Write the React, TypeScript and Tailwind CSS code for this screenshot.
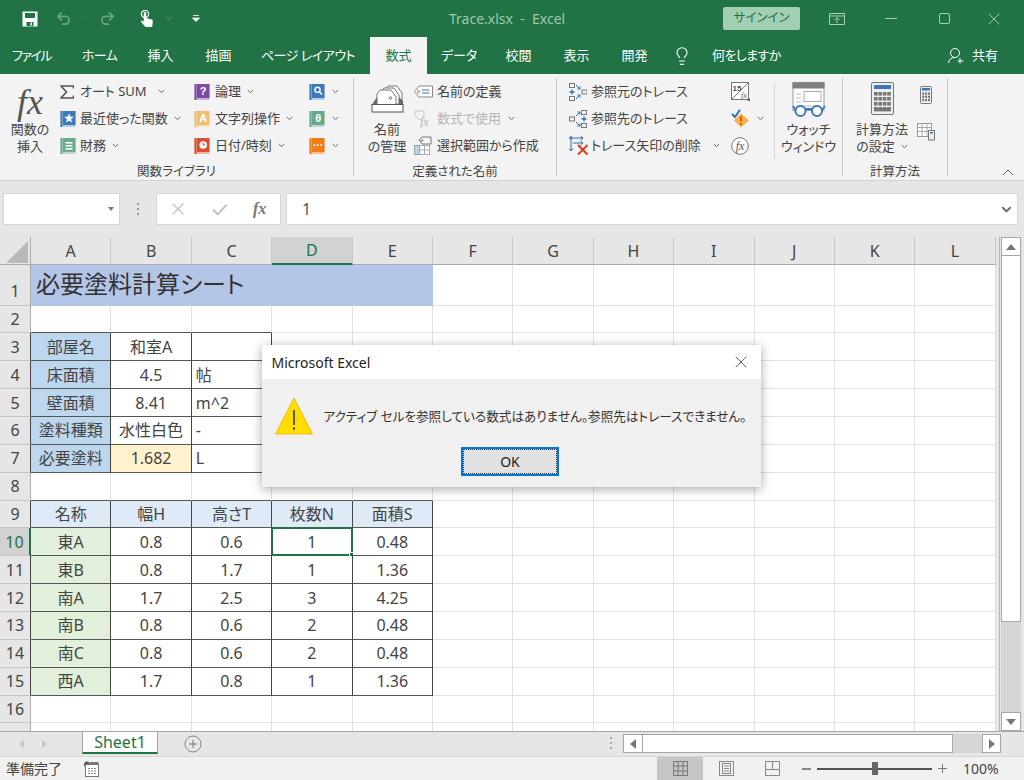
import { ChevronDown, Lightbulb, Redo2, Undo2, X } from "lucide-react";
import type { ReactNode } from "react";

const tabs = [
  { label: "ファイル", w: "w-[63px] tracking-[-1.5px]" },
  { label: "ホーム", w: "w-[73px] tracking-[-0.5px]" },
  { label: "挿入", w: "w-[49px]" },
  { label: "描画", w: "w-[67px]" },
  { label: "ページ レイアウト", w: "w-[112px] tracking-[-0.5px]" },
  { label: "数式", w: "w-[57px]", active: true },
  { label: "データ", w: "w-[64px]" },
  { label: "校閲", w: "w-[55px]" },
  { label: "表示", w: "w-[61px]" },
  { label: "開発", w: "w-[55px]" },
];

const columns = ["A", "B", "C", "D", "E", "F", "G", "H", "I", "J", "K", "L"];

const cells: Record<number, string[]> = {
  3: ["部屋名", "和室A", ""],
  4: ["床面積", "4.5", "帖"],
  5: ["壁面積", "8.41", "m^2"],
  6: ["塗料種類", "水性白色", "-"],
  7: ["必要塗料", "1.682", "L"],
  9: ["名称", "幅H", "高さT", "枚数N", "面積S"],
  10: ["東A", "0.8", "0.6", "1", "0.48"],
  11: ["東B", "0.8", "1.7", "1", "1.36"],
  12: ["南A", "1.7", "2.5", "3", "4.25"],
  13: ["南B", "0.8", "0.6", "2", "0.48"],
  14: ["南C", "0.8", "0.6", "2", "0.48"],
  15: ["西A", "1.7", "0.8", "1", "1.36"],
};

function isDark(col: number, row: number) {
  return (row >= 3 && row <= 7 && col >= 0 && col <= 2) || (row >= 9 && row <= 15 && col >= 0 && col <= 4);
}

function cellFill(col: number, row: number) {
  if (row >= 3 && row <= 7 && col === 0) return "bg-[#bdd7ee]";
  if (row === 7 && col === 1) return "bg-[#fff2cc]";
  if (row === 9 && col <= 4) return "bg-[#deeaf6]";
  if (row >= 10 && row <= 15 && col === 0) return "bg-[#e2efda]";
  return "bg-white";
}

function Chevron({ className = "" }: { className?: string }) {
  return (
    <svg width="7" height="5" viewBox="0 0 7 5" className={className}>
      <path d="M0.8 1 L3.5 3.6 L6.2 1" fill="none" stroke="#666" strokeWidth="1" />
    </svg>
  );
}

function Book({ color, light, children }: { color: string; light: string; children: ReactNode }) {
  return (
    <svg width="16" height="18" viewBox="0 0 16 18">
      <rect x="0.5" y="1" width="15" height="16" fill={light} />
      <rect x="0.5" y="1" width="2" height="16" fill={color} />
      <rect x="3" y="1" width="12.5" height="14" fill={color} />
      {children}
    </svg>
  );
}

function BookText({ children, size = 11 }: { children: string; size?: number }) {
  return (
    <text x="9.2" y="12.2" fontSize={size} fontWeight="700" fill="#fff" textAnchor="middle" fontFamily="Liberation Sans, sans-serif">
      {children}
    </text>
  );
}

function SaveIcon() {
  return (
    <svg width="16" height="16" viewBox="0 0 16 16">
      <path fillRule="evenodd" fill="#fff" d="M0.5 0.5 H15.5 V15.5 H0.5 Z M3 2 V7 H13 V2 Z M4.5 11 V15 H11.5 V11 Z" />
      <rect x="8.5" y="11.5" width="1.5" height="3" fill="#fff" />
    </svg>
  );
}

function TouchIcon() {
  return (
    <svg width="14" height="18" viewBox="0 0 14 18">
      <circle cx="5" cy="4" r="3.6" fill="none" stroke="#fff" strokeWidth="1.2" />
      <path fill="#fff" d="M3.8 3.2 a1.2 1.2 0 0 1 2.4 0 V8 l5.6 1.6 q1.2 0.4 1 1.6 L12.2 17 H5.4 L0.8 11.6 L2 10.4 L3.8 11.6 Z" />
    </svg>
  );
}

function TagIcon() {
  return (
    <svg width="19" height="13" viewBox="0 0 19 13">
      <path d="M0.5 6.5 L5 1 H18.5 V12 H5 Z" fill="#fff" stroke="#888" />
      <circle cx="4.6" cy="6.5" r="1.2" fill="none" stroke="#888" />
      <path d="M8 5 H15.5 M8 8 H15.5" stroke="#3f78b8" strokeWidth="1.2" />
    </svg>
  );
}

function UseInFormulaIcon() {
  return (
    <svg width="19" height="19" viewBox="0 0 19 19">
      <path d="M1 2 H10 V7 L6 11 L1 7 Z" fill="none" stroke="#c8c8c8" />
      <text x="6" y="17" fontSize="12" fontStyle="italic" fontFamily="Liberation Serif, serif" fill="#b5b5b5">fx</text>
    </svg>
  );
}

function FromSelectionIcon() {
  return (
    <svg width="19" height="19" viewBox="0 0 19 19">
      <rect x="0.5" y="9.5" width="15" height="9" fill="#fff" stroke="#aaa" />
      <rect x="0.5" y="9.5" width="5" height="9" fill="#bcd3ea" stroke="#8aa" />
      <path d="M5.5 14 H15.5 M10.5 9.5 V18.5" stroke="#aaa" />
      <path d="M5 4 L8 1 H17 V8 H8 Z" fill="#f5f5f5" stroke="#777" />
      <circle cx="8" cy="4.5" r="0.9" fill="none" stroke="#777" />
    </svg>
  );
}

function NameManagerIcon() {
  return (
    <svg width="33" height="28" viewBox="0 0 33 28">
      <path d="M14 5 L17 1 H26 L31 8 V18 H14 Z" fill="#fff" stroke="#777" />
      <path d="M10 7 L13 3 H23 L28 10 V19 H10 Z" fill="#fff" stroke="#777" />
      <path d="M6 9 L9 5 H20 L25 12 V20 H6 Z" fill="#fff" stroke="#777" />
      <circle cx="19.5" cy="13" r="1.3" fill="none" stroke="#777" />
      <path d="M6 12 L1 19.5 H6 Z" fill="#6b6b6b" />
      <path d="M28 12 L32 16 V20 H28 Z" fill="#6b6b6b" />
      <rect x="1" y="19.5" width="31" height="7.5" fill="#fff" stroke="#555" />
    </svg>
  );
}

function WatchIcon() {
  return (
    <svg width="34" height="36" viewBox="0 0 34 36">
      <rect x="1" y="0.5" width="31" height="28" fill="#fff" stroke="#9a9a9a" />
      <rect x="0.5" y="0.5" width="32" height="6" fill="#7f7f7f" />
      <rect x="12" y="9.5" width="17" height="10" fill="#fff" stroke="#aaa" />
      <path d="M4 12 H9 M4 16 H9 M4 20 H9 M4 24 H28" stroke="#bbb" />
      <circle cx="8.5" cy="29" r="5" fill="#fff" stroke="#3f78b8" strokeWidth="2" />
      <circle cx="25" cy="29" r="5" fill="#fff" stroke="#3f78b8" strokeWidth="2" />
      <path d="M13 27 H20 M3.5 28 L1 24 M30 28 L33 24" stroke="#3f78b8" strokeWidth="2" fill="none" />
    </svg>
  );
}

function CalcIcon() {
  const keys = [0, 1, 2, 3];
  return (
    <svg width="23" height="33" viewBox="0 0 23 33">
      <rect x="0.5" y="0.5" width="22" height="32" rx="1.5" fill="#eee" stroke="#777" />
      <rect x="3" y="3" width="17" height="4" fill="#3f78b8" />
      {keys.map((r) => keys.map((c) => <rect key={`${r}${c}`} x={3 + c * 4.4} y={10 + r * 5} width="3.6" height="3.6" fill="#777" />))}
      <rect x="3" y="26" width="17" height="3.4" fill="#777" />
    </svg>
  );
}

function SmallCalcIcon() {
  const keys = [0, 1, 2];
  return (
    <svg width="12" height="18" viewBox="0 0 12 18">
      <rect x="0.5" y="0.5" width="11" height="17" rx="1" fill="#eee" stroke="#777" />
      <rect x="2" y="2" width="8" height="2.5" fill="#3f78b8" />
      {keys.map((r) => keys.map((c) => <rect key={`${r}${c}`} x={2.2 + c * 2.9} y={6.5 + r * 3.2} width="2" height="2.2" fill="#777" />))}
    </svg>
  );
}

function SheetCalcIcon() {
  return (
    <svg width="18" height="18" viewBox="0 0 18 18">
      <rect x="0.5" y="0.5" width="14" height="13" fill="#fff" stroke="#999" />
      <path d="M0.5 4.5 H14.5 M0.5 8.5 H14.5 M5 0.5 V13.5 M10 0.5 V13.5" stroke="#aaa" />
      <rect x="11.5" y="7.5" width="6" height="9.5" fill="#eee" stroke="#777" />
      <rect x="13" y="9" width="3" height="1.5" fill="#3f78b8" />
    </svg>
  );
}

function PrecedentsIcon() {
  return (
    <svg width="18" height="18" viewBox="0 0 18 18">
      <rect x="0.5" y="0.5" width="5" height="4" fill="none" stroke="#777" />
      <rect x="0.5" y="13.5" width="5" height="4" fill="none" stroke="#777" />
      <rect x="13" y="7" width="5" height="4" fill="none" stroke="#777" />
      <path d="M0.5 9 H5.5 M3 6.5 V11.5" stroke="#2f70b8" strokeWidth="1.3" />
      <path d="M7 2 L11 6 M11 3.5 V6 H8.5 M7 16 L11 12 M8.5 12 H11 V14.5" fill="none" stroke="#2f70b8" />
    </svg>
  );
}

function DependentsIcon() {
  return (
    <svg width="18" height="18" viewBox="0 0 18 18">
      <rect x="0.5" y="7" width="5" height="4" fill="none" stroke="#777" />
      <rect x="12.5" y="0.5" width="5" height="4" fill="none" stroke="#777" />
      <rect x="12.5" y="13.5" width="5" height="4" fill="none" stroke="#777" />
      <path d="M12.5 9 H17.5 M15 6.5 V11.5" stroke="#2f70b8" strokeWidth="1.3" />
      <path d="M7 6 L11 2 M8.5 2 H11 V4.5 M7 12 L11 16 M11 13.5 V16 H8.5" fill="none" stroke="#2f70b8" />
    </svg>
  );
}

function RemoveArrowsIcon() {
  return (
    <svg width="20" height="20" viewBox="0 0 20 20">
      <rect x="0.5" y="0.5" width="3" height="3" fill="#2f70b8" />
      <path d="M4 2 H14 M11.5 0 L14 2 L11.5 4 M4 7 H14 M11.5 5 L14 7 L11.5 9 M2 4 V15 M0 12.5 L2 15 L4 12.5" fill="none" stroke="#2f70b8" />
      <path d="M9 9 L18.5 18.5 M18.5 9 L9 18.5" stroke="#d83b1d" strokeWidth="2" />
    </svg>
  );
}

function ShowFormulasIcon() {
  return (
    <svg width="19" height="19" viewBox="0 0 19 19">
      <rect x="0.5" y="0.5" width="17" height="17" fill="#fff" stroke="#777" />
      <path d="M1 17 L17 1" stroke="#777" />
      <text x="1.5" y="8.5" fontSize="8" fontWeight="700" fill="#555" fontFamily="Liberation Sans, sans-serif">15</text>
      <text x="10" y="16" fontSize="8" fontStyle="italic" fill="#555" fontFamily="Liberation Serif, serif">fx</text>
      <rect x="16.5" y="16.5" width="2.5" height="2.5" fill="#666" />
    </svg>
  );
}

function ErrorCheckIcon() {
  return (
    <svg width="19" height="19" viewBox="0 0 19 19">
      <path d="M1 5 L4 8 L9 0.8" fill="none" stroke="#2f70b8" strokeWidth="2" />
      <path d="M10 4.5 L18 11.5 L10 18.5 L3 11.5 Z" fill="#f6b04c" />
      <path d="M10 7.5 V12.5 M10 14 V15.8" stroke="#d83b1d" strokeWidth="1.6" />
    </svg>
  );
}

function EvaluateIcon() {
  return (
    <svg width="18" height="18" viewBox="0 0 18 18">
      <circle cx="9" cy="9" r="8.3" fill="#fff" stroke="#777" />
      <text x="9" y="13" fontSize="12" fontStyle="italic" fill="#555" textAnchor="middle" fontFamily="Liberation Serif, serif">fx</text>
    </svg>
  );
}

function RibbonRow({ icon, slot = "w-[20px]", label, chevron, gray }: { icon: ReactNode; slot?: string; label: string; chevron?: string; gray?: boolean }) {
  return (
    <div className="flex h-[27px] items-center">
      <div className={`${slot} flex shrink-0 items-center`}>{icon}</div>
      <span className={`whitespace-nowrap text-[13px] ${gray ? "text-[#b5b5b5]" : "text-[#444]"}`}>{label}</span>
      {chevron && <Chevron className={chevron} />}
    </div>
  );
}

function BigLabel({ lines, chevron }: { lines: string[]; chevron?: boolean }) {
  return (
    <div className="text-center text-[13px] leading-[17px] text-[#444]">
      {lines.map((line, i) => (
        <div key={line} className="flex items-center justify-center whitespace-nowrap">
          {line}
          {chevron && i === lines.length - 1 && <Chevron className="ml-[6px]" />}
        </div>
      ))}
    </div>
  );
}

function Group({ width, label, children }: { width: string; label: string; children: ReactNode }) {
  return (
    <div className={`${width} flex shrink-0 flex-col border-r border-[#c6c6c6]`}>
      <div className="flex flex-1">{children}</div>
      <div className="h-[14px] text-center text-[12.5px] leading-[20px] text-[#444]">{label}</div>
    </div>
  );
}

function Ribbon() {
  return (
    <div className="flex h-[107px] border-b border-[#d2d2d2] bg-[#f3f3f3] pt-[4px] pb-[4px]">
      <Group width="w-[354px]" label="関数ライブラリ">
        <div className="flex w-[60px] flex-col items-center">
          <div className="flex h-[43px] items-center pt-1 [font-family:'Liberation_Serif',serif] text-[36px] italic leading-none text-[#555]">fx</div>
          <BigLabel lines={["関数の", "挿入"]} />
        </div>
        <div className="w-[134px]">
          <RibbonRow
            label="オート SUM"
            chevron="ml-[11px]"
            icon={
              <svg width="14" height="14" viewBox="0 0 14 14">
                <path d="M13.5 3.5 V1 H1 L6.5 7 L1 13 H13.5 V10.5" fill="none" stroke="#555" strokeWidth="1.6" />
              </svg>
            }
          />
          <RibbonRow label="最近使った関数" chevron="ml-[6px]" icon={<Book color="#3f78b8" light="#b9cde4"><BookText>★</BookText></Book>} />
          <RibbonRow label="財務" chevron="ml-[6px]" icon={<Book color="#6aa98e" light="#bcd9cc"><rect x="5.5" y="5" width="7" height="1.6" fill="#fff" /><rect x="5.5" y="8" width="7" height="1.6" fill="#fff" /><rect x="5.5" y="11" width="7" height="1.6" fill="#fff" /></Book>} />
        </div>
        <div className="w-[115px]">
          <RibbonRow slot="w-[21px]" label="論理" chevron="ml-[6px]" icon={<Book color="#7c4a9e" light="#c8b3d8"><BookText>?</BookText></Book>} />
          <RibbonRow slot="w-[21px]" label="文字列操作" chevron="ml-[6px]" icon={<Book color="#f0bf72" light="#f7dfb8"><BookText>A</BookText></Book>} />
          <RibbonRow slot="w-[21px]" label="日付/時刻" chevron="ml-[6px]" icon={<Book color="#d9502e" light="#efb5a5"><circle cx="9.2" cy="8" r="3.8" fill="#fff" /><path d="M9.2 5.5 V8 H11.5" stroke="#d9502e" fill="none" /></Book>} />
        </div>
        <div className="w-[44px]">
          <div className="flex h-[27px] items-center gap-[7px]"><Book color="#3f78b8" light="#b9cde4"><circle cx="8.5" cy="6.8" r="2.6" fill="none" stroke="#fff" strokeWidth="1.4" /><path d="M10.5 9 L13 11.5" stroke="#fff" strokeWidth="1.6" /></Book><Chevron /></div>
          <div className="flex h-[27px] items-center gap-[7px]"><Book color="#6aa98e" light="#bcd9cc"><BookText>θ</BookText></Book><Chevron /></div>
          <div className="flex h-[27px] items-center gap-[7px]"><Book color="#ee7d1c" light="#f6c08c"><BookText size={10}>···</BookText></Book><Chevron /></div>
        </div>
      </Group>

      <Group width="w-[203px]" label="定義された名前">
        <div className="flex w-[60px] flex-col items-center pl-[6px]">
          <div className="flex h-[43px] items-start pt-[7px]"><NameManagerIcon /></div>
          <BigLabel lines={["名前", "の管理"]} />
        </div>
        <div>
          <RibbonRow slot="w-[23px]" label="名前の定義" icon={<TagIcon />} />
          <RibbonRow slot="w-[23px]" label="数式で使用" chevron="ml-[7px]" gray icon={<UseInFormulaIcon />} />
          <RibbonRow slot="w-[23px]" label="選択範囲から作成" icon={<FromSelectionIcon />} />
        </div>
      </Group>

      <Group width="w-[286px]" label="ワークシート分析">
        <div className="w-[174px] pl-[12px]">
          <RibbonRow slot="w-[22px]" label="参照元のトレース" icon={<PrecedentsIcon />} />
          <RibbonRow slot="w-[22px]" label="参照先のトレース" icon={<DependentsIcon />} />
          <RibbonRow slot="w-[22px]" label="トレース矢印の削除" chevron="ml-[12px]" icon={<RemoveArrowsIcon />} />
        </div>
        <div className="w-[44px] border-r border-[#d8d8d8] mb-[22px] mt-[6px]">
          <div className="-mt-[6px] flex h-[27px] items-center"><ShowFormulasIcon /></div>
          <div className="flex h-[27px] items-center gap-[7px]"><ErrorCheckIcon /><Chevron /></div>
          <div className="flex h-[27px] items-center"><EvaluateIcon /></div>
        </div>
        <div className="flex w-[67px] flex-col items-center">
          <div className="flex h-[43px] items-start pt-[4px]"><WatchIcon /></div>
          <BigLabel lines={["ウォッチ", "ウィンドウ"]} />
        </div>
      </Group>

      <Group width="w-[105px]" label="計算方法">
        <div className="ml-[2px] flex w-[74px] flex-col items-center">
          <div className="flex h-[43px] items-start pt-[4px]"><CalcIcon /></div>
          <BigLabel lines={["計算方法", "の設定"]} chevron />
        </div>
        <div className="-ml-[2px] flex w-[18px] flex-col items-center gap-[19px] pt-[8px]">
          <SmallCalcIcon />
          <SheetCalcIcon />
        </div>
      </Group>

      <div className="relative flex-1">
        <svg width="12" height="7" viewBox="0 0 12 7" className="absolute right-[10px] bottom-[0px]">
          <path d="M1 6 L6 1 L11 6" fill="none" stroke="#666" />
        </svg>
      </div>
    </div>
  );
}

function FormulaBar() {
  return (
    <div className="flex h-[56px] items-start bg-[#e6e6e6] pt-[12px] pl-[3px] pr-[6px]">
      <div className="flex h-[32px] w-[117px] items-center justify-end border border-[#d6d6d6] bg-white pr-[5px]">
        <svg width="6" height="4" viewBox="0 0 6 4"><path d="M0 0 H6 L3 4 Z" fill="#777" /></svg>
      </div>
      <div className="flex h-[32px] w-[36px] flex-col items-center justify-center gap-[3px]">
        <span className="h-[2px] w-[2px] bg-[#999]" />
        <span className="h-[2px] w-[2px] bg-[#999]" />
        <span className="h-[2px] w-[2px] bg-[#999]" />
      </div>
      <div className="flex h-[32px] w-[125px] items-center border border-[#d6d6d6] bg-white">
        <X className="ml-[11px] h-[20px] w-[20px] text-[#c0c0c0]" strokeWidth={1.4} />
        <svg width="16" height="13" viewBox="0 0 18 14" className="ml-[24px]"><path d="M1 7 L6.5 12.5 L16.5 1.5" fill="none" stroke="#c0c0c0" strokeWidth="2.2" /></svg>
        <span className="ml-[25px] [font-family:'Liberation_Serif',serif] text-[16px] font-bold italic text-[#777]">fx</span>
      </div>
      <div className="ml-[5px] flex h-[32px] flex-1 items-center border border-[#d6d6d6] bg-white pl-[15px] text-[16px] text-[#555]">
        1
        <ChevronDown className="ml-auto mr-[3px] h-[15px] w-[15px] text-[#666]" strokeWidth={3} />
      </div>
    </div>
  );
}

function Grid() {
  const rows = Array.from({ length: 17 }, (_, i) => i + 1);
  return (
    <div className="h-full w-[1000px] overflow-hidden border-r border-[#b5b5b5]">
      <div className="grid grid-cols-[31px_repeat(12,80.4px)] grid-rows-[28px_40.5px] auto-rows-[27.86px] text-[16px] text-[#444]">
        <div className="relative border-r border-b border-[#ababab] bg-[#e6e6e6]">
          <svg width="22" height="22" viewBox="0 0 22 22" className="absolute left-[6px] top-[4px]"><path d="M22 0 V22 H0 Z" fill="#b9b9b9" /></svg>
        </div>
        {columns.map((c) => (
          <div
            key={c}
            className={c === "D" ? "flex items-center justify-center border-r border-b-2 border-[#c6c6c6] border-b-[#217346] bg-[#d2d2d2] text-[#217346]" : "flex items-center justify-center border-r border-b border-[#c6c6c6] border-b-[#ababab] bg-[#e6e6e6]"}
          >
            {c}
          </div>
        ))}

        {rows.map((row) => {
          const active = row === 10;
          return [
            <div
              key={`h${row}`}
              className={`flex justify-center border-b border-[#c6c6c6] ${row === 1 ? "items-end pb-[2px]" : "items-center"} ${active ? "border-r-2 border-r-[#217346] bg-[#d2d2d2] text-[#217346]" : `border-r ${isDark(0, row) ? "border-r-[#444]" : "border-r-[#ababab]"} bg-[#e6e6e6]`}`}
            >
              {row}
            </div>,
            row === 1 && (
              <div key="title" className="col-span-5 flex items-center bg-[#b4c6e7] pl-[5px] pb-[2px] text-[24px] text-[#333]">
                必要塗料計算シート
              </div>
            ),
            ...columns.map((_, col) => {
              if (row === 1 && col < 5) return null;
              const value = cells[row]?.[col] ?? "";
              const leftAlign = col === 2 && row >= 4 && row <= 7;
              return (
                <div
                  key={`${row}-${col}`}
                  className={`relative flex items-center border-r border-b ${leftAlign ? "justify-start pl-[4px]" : "justify-center"} ${isDark(col, row) || isDark(col + 1, row) ? "border-r-[#444]" : "border-r-[#e2e2e2]"} ${isDark(col, row) || isDark(col, row + 1) ? "border-b-[#555]" : "border-b-[#e2e2e2]"} ${cellFill(col, row)}`}
                >
                  {value}
                  {row === 10 && col === 3 && (
                    <div className="absolute -top-px -left-px -right-px -bottom-px border-2 border-[#217346]">
                      <span className="absolute -right-[4px] -bottom-[4px] h-[6px] w-[6px] border border-white bg-[#217346]" />
                    </div>
                  )}
                </div>
              );
            }),
          ];
        })}
      </div>
    </div>
  );
}

function ScrollArrow({ dir }: { dir: "up" | "down" | "left" | "right" }) {
  const d = { up: "M0 6 L5 0 L10 6 Z", down: "M0 0 H10 L5 6 Z", left: "M6 0 V10 L0 5 Z", right: "M0 0 V10 L6 5 Z" }[dir];
  const horizontal = dir === "left" || dir === "right";
  return (
    <svg width={horizontal ? 6 : 10} height={horizontal ? 10 : 6} viewBox={horizontal ? "0 0 6 10" : "0 0 10 6"}>
      <path d={d} fill="#777" />
    </svg>
  );
}

function VerticalScroll() {
  return (
    <div className="ml-[1px] flex h-full w-[20px] flex-col bg-[#d6d6d6]">
      <div className="flex h-[19px] shrink-0 items-center justify-center border border-[#a6a6a6] bg-white"><ScrollArrow dir="up" /></div>
      <div className="h-[366px] shrink-0 border border-t-0 border-[#a6a6a6] bg-white" />
      <div className="flex-1" />
      <div className="flex h-[19px] shrink-0 items-center justify-center border border-[#a6a6a6] bg-white"><ScrollArrow dir="down" /></div>
    </div>
  );
}

function SheetTabs() {
  return (
    <div className="flex h-[25px] shrink-0 items-start border-t border-[#a6a6a6] bg-[#e6e6e6]">
      <div className="flex h-[24px] w-[82px] shrink-0 items-center gap-[18px] pl-[19px] opacity-50">
        <svg width="5" height="8" viewBox="0 0 5 8"><path d="M5 0 V8 L0 4 Z" fill="#aaa" /></svg>
        <svg width="5" height="8" viewBox="0 0 5 8"><path d="M0 0 V8 L5 4 Z" fill="#aaa" /></svg>
      </div>
      <div className="-mt-px flex h-[23px] w-[76px] items-center justify-center border-x border-t border-[#a6a6a6] border-b-2 border-b-[#217346] bg-white text-[16px] text-[#217346]">Sheet1</div>
      <svg width="18" height="18" viewBox="0 0 18 18" className="ml-[26px] mt-[3px]">
        <circle cx="9" cy="9" r="8" fill="none" stroke="#888" />
        <path d="M9 5 V13 M5 9 H13" stroke="#777" />
      </svg>
      <div className="ml-[406px] mt-[5px] flex w-[6px] flex-col items-center gap-[3px]">
        <span className="h-[2px] w-[2px] bg-[#aaa]" />
        <span className="h-[2px] w-[2px] bg-[#aaa]" />
        <span className="h-[2px] w-[2px] bg-[#aaa]" />
      </div>
      <div className="ml-[9px] mt-[2px] flex h-[19px] w-[378px] bg-[#d6d6d6]">
        <div className="flex w-[20px] items-center justify-center border border-[#a6a6a6] bg-white"><ScrollArrow dir="left" /></div>
        <div className="w-[310px] border border-l-0 border-[#a6a6a6] bg-white" />
        <div className="flex-1" />
        <div className="flex w-[19px] items-center justify-center border border-[#a6a6a6] bg-white"><ScrollArrow dir="right" /></div>
      </div>
    </div>
  );
}

function StatusBar() {
  return (
    <div className="flex h-[24px] shrink-0 items-center border-t border-[#d6d6d6] bg-[#f1f1f1] text-[14px] text-[#444]">
      <span className="ml-[6px] w-[77px]">準備完了</span>
      <svg width="16" height="16" viewBox="0 0 16 16">
        <circle cx="4" cy="3.5" r="3" fill="#555" />
        <rect x="2.5" y="3.5" width="13" height="12" fill="#fff" stroke="#777" />
        <path d="M5 7.5 H13 M5 10 H13 M5 12.5 H13" stroke="#888" strokeDasharray="2 1" />
        <rect x="7" y="1" width="8.5" height="2.5" fill="#777" />
      </svg>
      <div className="ml-[558px] flex h-full w-[46px] items-center justify-center bg-[#c6c6c6]">
        <svg width="15" height="15" viewBox="0 0 15 15"><path d="M0.5 0.5 H14.5 V14.5 H0.5 Z M5 0.5 V14.5 M10 0.5 V14.5 M0.5 5 H14.5 M0.5 10 H14.5" fill="none" stroke="#777" /></svg>
      </div>
      <div className="flex h-full w-[46px] items-center justify-center">
        <svg width="15" height="15" viewBox="0 0 15 15"><rect x="0.5" y="0.5" width="14" height="14" fill="none" stroke="#888" /><rect x="3.5" y="2.5" width="8" height="10" fill="none" stroke="#888" /><path d="M5 5 H10 M5 7.5 H10 M5 10 H10" stroke="#888" /></svg>
      </div>
      <div className="flex h-full w-[46px] items-center justify-center">
        <svg width="15" height="15" viewBox="0 0 15 15"><path d="M0.5 0.5 H14.5 V14.5 H0.5 Z M0.5 8.5 H14.5 M7.5 0.5 V8.5" fill="none" stroke="#888" /></svg>
      </div>
      <span className="ml-[7px] h-[2px] w-[9px] bg-[#888]" />
      <div className="relative ml-[6px] h-[2px] w-[115px] bg-[#555]">
        <span className="absolute left-[55px] -top-[6px] h-[13px] w-[6px] bg-[#666]" />
      </div>
      <svg width="9" height="9" viewBox="0 0 9 9" className="ml-[6px]"><path d="M4.5 0 V9 M0 4.5 H9" stroke="#777" /></svg>
      <span className="ml-[16px] text-[14px]">100%</span>
    </div>
  );
}

function Dialog() {
  return (
    <div className="absolute left-[261.5px] top-[345px] h-[142px] w-[499.5px] bg-[#f0f0f0] shadow-[0_2px_10px_rgba(0,0,0,0.35)]">
      <div className="flex h-[34px] items-center justify-between bg-white pl-[10px] pr-[10px] text-[14px] text-[#222]">
        Microsoft Excel
        <X className="h-[20px] w-[20px] text-[#444]" strokeWidth={1} />
      </div>
      <div className="flex h-[68px] items-center pt-[8px] pl-[13px]">
        <svg width="38" height="38" viewBox="0 0 38 38" className="-mt-[2px]">
          <path d="M19 1 L37.5 37 H0.5 Z" fill="#ffdd00" stroke="#eeb400" strokeWidth="0.8" />
          <path d="M19 13 V28" stroke="#222" strokeWidth="1.4" />
          <rect x="18" y="30.5" width="2" height="2" fill="#222" />
        </svg>
        <span className="ml-[11px] whitespace-nowrap text-[12.6px] text-[#333]">アクティブ セルを参照している数式はありません。参照先はトレースできません。</span>
      </div>
      <div className="ml-[199.5px] flex h-[29px] w-[98px] items-center justify-center border-2 border-[#0078d7] bg-[#e1e1e1] text-[14px] text-[#222] outline-1 -outline-offset-3 outline-dotted outline-[#333]">
        OK
      </div>
    </div>
  );
}

export default function App() {
  return (
    <div className="relative flex h-[780px] w-[1024px] flex-col overflow-hidden bg-[#e6e6e6] [font-family:'Noto_Sans','Noto_Sans_CJK_JP',sans-serif] [font-feature-settings:'palt']">
      <div className="flex h-[37px] shrink-0 items-center bg-[#217346] pl-[22px]">
        <SaveIcon />
        <Undo2 className="ml-[17px] h-[17px] w-[17px] text-[#6aa583]" strokeWidth={2.4} />
        <Chevron className="ml-[8px] opacity-40" />
        <Redo2 className="ml-[12px] h-[17px] w-[17px] text-[#6aa583]" strokeWidth={2.4} />
        <Chevron className="ml-[8px] opacity-40" />
        <div className="ml-[9px]"><TouchIcon /></div>
        <Chevron className="ml-[11px] opacity-60 invert" />
        <svg width="8" height="7" viewBox="0 0 8 7" className="ml-[20px]"><path d="M1 0.5 H7 M0.5 3 H7.5 L4 6.5 Z" fill="#fff" stroke="#fff" strokeWidth="0.8" /></svg>
        <span className="ml-[249px] whitespace-nowrap text-[14px] text-[#9ec8ae]">Trace.xlsx&nbsp; -&nbsp; Excel</span>
        <div className="ml-[158px] flex h-[23px] w-[77px] items-center justify-center rounded-[2px] bg-[#a2cfb3] text-[12.5px] text-[#217346]">サインイン</div>
        <svg width="16" height="12" viewBox="0 0 16 12" className="ml-[29px]"><path d="M0.5 0.5 H15.5 V11.5 H0.5 Z M0.5 3 H15.5 M8 10 V5 M5.5 7 L8 4.5 L10.5 7" fill="none" stroke="#a6cfb5" /></svg>
        <span className="ml-[40px] h-px w-[12px] bg-[#a6cfb5]" />
        <span className="ml-[42px] h-[11px] w-[11px] rounded-[2px] border border-[#a6cfb5]" />
        <X className="ml-[34px] h-[20px] w-[20px] text-[#a6cfb5]" strokeWidth={1.1} />
      </div>

      <div className="flex h-[37px] shrink-0 items-stretch bg-[#217346] text-[13px] text-white">
        {tabs.map((tab) => (
          <div key={tab.label} className={`${tab.w} flex items-center justify-center whitespace-nowrap ${tab.active ? "ml-[6px] bg-[#f3f3f3] text-[#217346]" : ""}`}>
            {tab.label}
          </div>
        ))}
        <div className="flex items-center pl-[10px]">
          <Lightbulb className="h-[20px] w-[20px]" strokeWidth={1.3} />
          <span className="ml-[20px] whitespace-nowrap tracking-[-0.6px]">何をしますか</span>
        </div>
        <div className="ml-auto flex items-center pr-[26px]">
          <svg width="16" height="17" viewBox="0 0 16 17">
            <circle cx="7" cy="6" r="4.5" fill="none" stroke="#fff" />
            <path d="M0.5 16 Q1 10.5 7 10.5 M12 11 V16.5 M9.5 14 H15.5" fill="none" stroke="#fff" />
          </svg>
          <span className="ml-[8px]">共有</span>
        </div>
      </div>

      <Ribbon />
      <FormulaBar />

      <div className="flex h-[494px] shrink-0">
        <Grid />
        <VerticalScroll />
      </div>

      <SheetTabs />
      <StatusBar />
      <Dialog />
    </div>
  );
}
